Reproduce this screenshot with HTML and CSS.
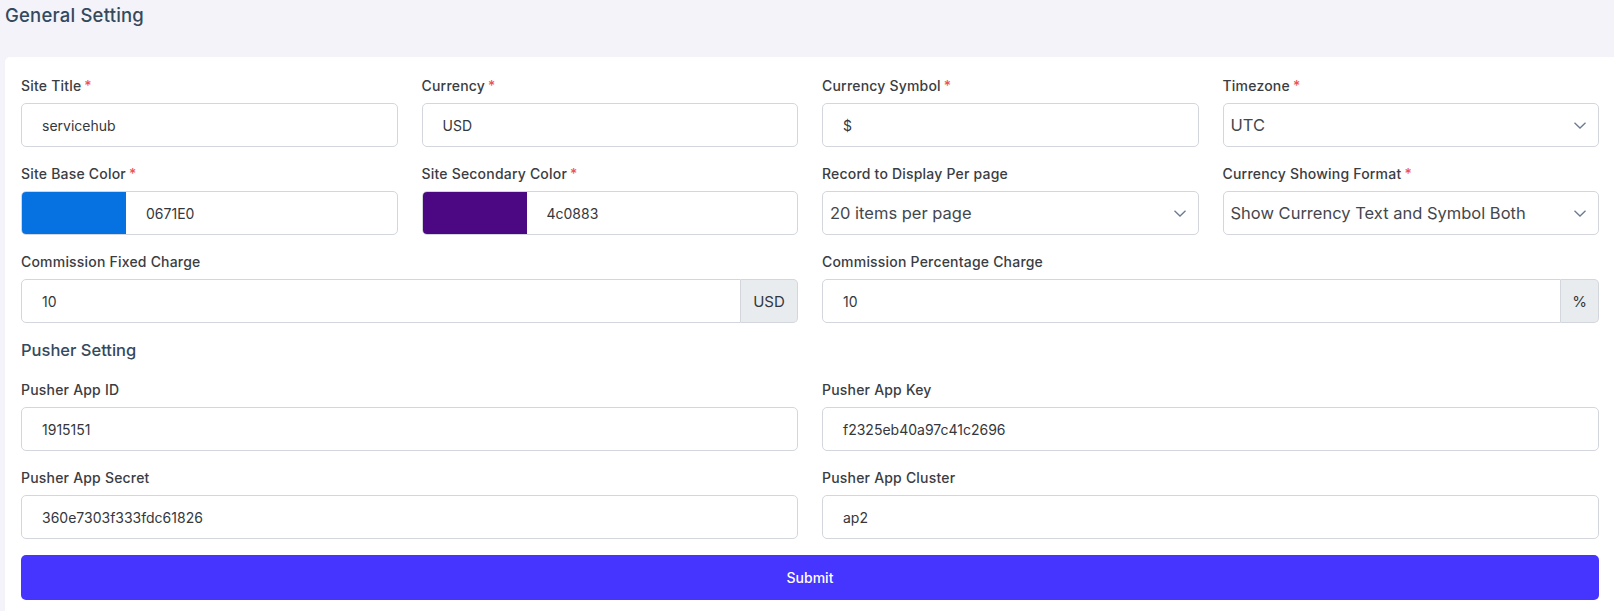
FILE: index.html
```html
<!DOCTYPE html>
<html lang="en">
<head>
<meta charset="utf-8">
<title>General Setting</title>
<link rel="stylesheet" href="styles.css">
</head>
<body>
<h1 class="page-title">General Setting</h1>
<div class="card">
  <form class="form-grid">
    <div class="field">
      <label class="label">Site Title<span class="req">*</span></label>
      <div class="control"><span class="val">servicehub</span></div>
    </div>
    <div class="field">
      <label class="label">Currency<span class="req">*</span></label>
      <div class="control"><span class="val">USD</span></div>
    </div>
    <div class="field">
      <label class="label">Currency Symbol<span class="req">*</span></label>
      <div class="control"><span class="val">$</span></div>
    </div>
    <div class="field">
      <label class="label">Timezone<span class="req">*</span></label>
      <div class="control select"><span class="sel-val">UTC</span>
        <svg class="chev" width="12" height="7" viewBox="0 0 12 7"><polyline points="0.5,0.8 6,6 11.5,0.8" fill="none" stroke="#6b7a90" stroke-width="1.3"/></svg>
      </div>
    </div>

    <div class="field">
      <label class="label">Site Base Color<span class="req">*</span></label>
      <div class="control color"><span class="swatch swatch-blue"></span><span class="val">0671E0</span></div>
    </div>
    <div class="field">
      <label class="label">Site Secondary Color<span class="req">*</span></label>
      <div class="control color"><span class="swatch swatch-purple"></span><span class="val">4c0883</span></div>
    </div>
    <div class="field">
      <label class="label">Record to Display Per page</label>
      <div class="control select"><span class="sel-val">20 items per page</span>
        <svg class="chev" width="12" height="7" viewBox="0 0 12 7"><polyline points="0.5,0.8 6,6 11.5,0.8" fill="none" stroke="#6b7a90" stroke-width="1.3"/></svg>
      </div>
    </div>
    <div class="field">
      <label class="label">Currency Showing Format<span class="req">*</span></label>
      <div class="control select"><span class="sel-val">Show Currency Text and Symbol Both</span>
        <svg class="chev" width="12" height="7" viewBox="0 0 12 7"><polyline points="0.5,0.8 6,6 11.5,0.8" fill="none" stroke="#6b7a90" stroke-width="1.3"/></svg>
      </div>
    </div>

    <div class="field span2">
      <label class="label">Commission Fixed Charge</label>
      <div class="group">
        <div class="control grp-input"><span class="val">10</span></div>
        <span class="addon addon-usd">USD</span>
      </div>
    </div>
    <div class="field span2">
      <label class="label">Commission Percentage Charge</label>
      <div class="group">
        <div class="control grp-input"><span class="val">10</span></div>
        <span class="addon addon-pct">%</span>
      </div>
    </div>

    <h2 class="section-title span4">Pusher Setting</h2>

    <div class="field span2">
      <label class="label">Pusher App ID</label>
      <div class="control"><span class="val">1915151</span></div>
    </div>
    <div class="field span2">
      <label class="label">Pusher App Key</label>
      <div class="control"><span class="val">f2325eb40a97c41c2696</span></div>
    </div>
    <div class="field span2">
      <label class="label">Pusher App Secret</label>
      <div class="control"><span class="val">360e7303f333fdc61826</span></div>
    </div>
    <div class="field span2">
      <label class="label">Pusher App Cluster</label>
      <div class="control"><span class="val">ap2</span></div>
    </div>

    <button type="button" class="submit span4">Submit</button>
  </form>
</div>
</body>
</html>
```
FILE: styles.css
```css
* { box-sizing: border-box; }
body {
  margin: 0;
  background: #f3f3f9;
  font-family: Inter, "Open Sans", "Liberation Sans", sans-serif;
  color: #34373c;
}
.page-title {
  margin: 0;
  padding: 4px 0 0 5px;
  height: 57px;
  font-size: 18.5px;
  font-weight: 500;
  line-height: 22px;
  letter-spacing: 0.2px;
  color: #34495e;
}
.card {
  margin-left: 5px;
  background: #fff;
  border-radius: 5px 0 0 0;
  padding: 19px 15px 12px 16px;
}
.form-grid {
  display: grid;
  grid-template-columns: repeat(4, 1fr);
  column-gap: 24px;
  row-gap: 17px;
}
.span2 { grid-column: span 2; }
.span4 { grid-column: span 4; }
.field { display: flex; flex-direction: column; }
.label {
  font-size: 14px;
  line-height: 20px;
  font-weight: 500;
  letter-spacing: 0.2px;
  color: #3a3d42;
  margin-bottom: 7px;
}
.req { color: #ea5455; margin-left: 3px; }
.control {
  height: 44px;
  border: 1px solid #d3d6dc;
  border-radius: 5px;
  display: flex;
  align-items: center;
  padding-left: 20px;
  font-size: 14px;
  color: #34373c;
  background: #fff;
}
.select {
  padding-left: 7px;
  padding-right: 12px;
  justify-content: space-between;
}
.sel-val { font-size: 16.5px; color: #44474d; }
.chev { display: block; }
.color { padding-left: 0; overflow: hidden; }
.swatch { width: 104px; height: 100%; margin-right: 20px; }
.swatch-blue { background: #0671e0; }
.swatch-purple { background: #4c0883; }
.group { display: flex; height: 44px; }
.grp-input {
  flex: 1;
  border-radius: 5px 0 0 5px;
}
.addon {
  display: flex;
  align-items: center;
  justify-content: center;
  background: #e9ecef;
  border: 1px solid #d3d6dc;
  border-left: 0;
  border-radius: 0 5px 5px 0;
  font-size: 15px;
  color: #34373c;
}
.addon-usd { width: 57px; }
.addon-pct { width: 38px; }
.section-title {
  margin: 0;
  font-size: 16.5px;
  font-weight: 500;
  line-height: 20px;
  padding-bottom: 3px;
  color: #34495e;
}
.submit {
  margin-top: -1px;
  height: 45px;
  border: 0;
  border-radius: 5px;
  background: #4634ff;
  color: #fff;
  font-family: inherit;
  font-size: 14px;
  font-weight: 500;
}
```
